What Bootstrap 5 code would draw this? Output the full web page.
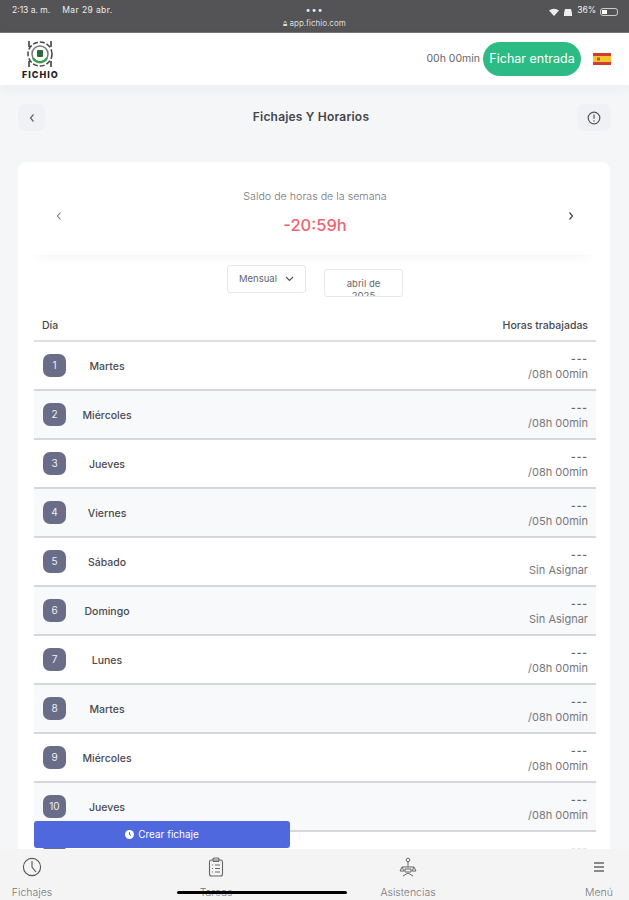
<!DOCTYPE html>
<html lang="es">
<head>
    <meta charset="UTF-8">
    <title>Fichajes Y Horarios</title>
    <meta name="viewport" content="width=device-width, initial-scale=1">
    <link href="https://cdn.jsdelivr.net/npm/bootstrap@5.3.2/dist/css/bootstrap.min.css" rel="stylesheet">
    <style>
        html, body { height: 900px; overflow: hidden; }
        body {
            background: #f5f6f8;
            font-family: "Inter", "Noto Sans", sans-serif;
            color: #3a3a40;
            position: relative;
        }
        .status-bar {
            height: 33px;
            background: #545456;
            border-bottom: 1px solid #77777a;
            color: #eee;
            font-size: 8.5px;
            padding: 4px 11px 0 12px;
            position: relative;
        }
        .status-date { margin-left: 12px; letter-spacing: .4px; }
        .status-mid { position: absolute; left: 0; right: 0; top: 5px; text-align: center; line-height: 1; }
        .status-dots { letter-spacing: 1px; font-size: 9px; line-height: 10px; }
        .status-url { font-size: 8px; color: #ddd; margin-top: 4px; }
        .battery { width: 18px; height: 8px; border: 1px solid #ccc; border-radius: 3px; padding: 1px; display: inline-block; }
        .battery i { display: block; width: 35%; height: 100%; background: #fff; }
        .top-head {
            height: 52px;
            background: #fff;
            padding: 0 18px 0 22px;
            box-shadow: 0 4px 10px rgba(40, 50, 70, .05);
            position: relative;
        }
        .logo-word { font-size: 9px; font-weight: 800; letter-spacing: 1px; color: #222; line-height: 1; margin-top: 1px; }
        .time-txt { font-size: 10.5px; color: #66666c; }
        .btn-fichar {
            background: #2dbb85;
            color: #fff;
            border: 0;
            border-radius: 17px;
            height: 34px;
            width: 98px;
            padding: 0;
            font-size: 12.5px;
            margin: 0 12px 0 3px;
        }
        .flag { width: 18px; height: 12px; display: block; }
        .sub-head { padding: 19px 18px 0; height: 77px; }
        .sq-btn {
            width: 27px; height: 27px;
            background: #eff1f4;
            border-radius: 7px;
            color: #555;
        }
        .sq-info { width: 34px; }
        .page-title { font-size: 12px; font-weight: 600; color: #45454b; letter-spacing: .2px; line-height: 18px; padding-top: 4px; }
        .main-box {
            margin: 0 19px 0 18px;
            background: #fff;
            border-radius: 8px;
            padding: 3px 14px 0 12px;
            height: 738px;
            overflow: hidden;
        }
        .week-box {
            height: 90px;
            padding: 0 21px 4px 25px;
            box-shadow: 0 10px 10px -8px rgba(40, 50, 70, .05);
            margin-bottom: 10px;
        }
        .week-arrow { margin-top: 16px; }
        .week-label { font-size: 10.7px; color: #77777c; font-weight: 300; margin-top: 8px; }
        .week-val { font-size: 16.5px; color: #ee6470; font-weight: 500; margin-top: 10px; line-height: 20px; }
        .filter-line { gap: 18px; margin-left: 4px; height: 32px; }
        .filter-box {
            width: 79px; height: 28px;
            border: 1px solid #e6e7ea;
            border-radius: 3px;
            font-size: 9.5px;
            color: #66666c;
            background: #fff;
        }
        .filter-date {
            margin-top: 4px;
            overflow: hidden;
            text-align: center;
            line-height: 12px;
            padding: 8px 18px 0;
        }
        .head-row {
            margin-top: 12px;
            margin-left: 4px;
            height: 33px;
            padding: 2px 8px 0;
            font-size: 10.5px;
            font-weight: 500;
            color: #47474d;
            border-bottom: 2px solid #dcdde0;
        }
        .day-row {
            margin-left: 4px;
            height: 49px;
            padding: 0 8px 0 9px;
            border-bottom: 2px solid #d6d7da;
        }
        .day-row:nth-child(even) { background: #f8f9fb; }
        .day-num {
            width: 23px; height: 23px;
            background: #6a6d88;
            color: #f0f0f4;
            border-radius: 7px;
            font-size: 10px;
            flex: none;
        }
        .day-name { width: 86px; text-align: center; font-size: 10.5px; font-weight: 500; color: #4a4a50; padding: 2px 4px 0 0; }
        .day-hours { font-size: 11px; line-height: 16px; text-align: right; color: #77777c; padding-top: 1px; }
        .day-hours b { display: block; font-weight: 700; color: #66666c; letter-spacing: 1px; font-size: 10px; }
        .btn-crear {
            position: absolute;
            left: 34px; top: 821px;
            width: 256px; height: 27px;
            background: #4f68dd;
            color: #fff;
            border: 0;
            border-radius: 3px;
            font-size: 10px;
            padding: 0;
            z-index: 3;
        }
        .tab-bar {
            position: absolute;
            left: 0; right: 0; top: 849px; height: 51px;
            background: #f4f4f5;
            z-index: 2;
            padding: 8px 0 0;
        }
        .tab-item { color: #77777c; font-size: 10.5px; font-weight: 300; line-height: 1; }
        .tab-item svg { display: block; margin-bottom: 11px; }
        .tab-1 { margin-left: 12px; width: 40px; }
        .tab-2 { margin-left: 147px; width: 34px; }
        .tab-3 { margin-left: 150px; width: 50px; }
        .tab-4 { margin-left: 152px; width: 28px; }
        .home-bar {
            position: absolute;
            left: 177px; top: 891px;
            width: 170px; height: 3px;
            background: #000;
            border-radius: 2px;
            z-index: 4;
        }
    </style>
</head>
<body>
    <div class="status-bar d-flex justify-content-between">
        <div><span>2:13 a. m.</span><span class="status-date">Mar 29 abr.</span></div>
        <div class="status-mid">
            <div class="status-dots">•••</div>
            <div class="status-url">🔒︎ app.fichio.com</div>
        </div>
        <div class="d-flex align-items-start gap-1">
            <svg width="10" height="9" viewBox="0 0 10 9" class="mt-1"><path d="M0 2.5Q5-1 10 2.5L5 8Z" fill="#eee"/></svg>
            <svg width="10" height="9" viewBox="0 0 10 9" class="mt-1"><path d="M2 1h6l1 4v3H1V5z" fill="#eee"/></svg>
            <span>36%</span>
            <span class="battery mt-1"><i></i></span>
        </div>
    </div>

    <header class="top-head d-flex align-items-center justify-content-between">
        <div class="d-flex flex-column align-items-center">
            <svg width="30" height="30" viewBox="0 0 30 30" fill="none">
                <circle cx="15" cy="15" r="12" stroke="#444" stroke-width="1.5" stroke-dasharray="5 2"/>
                <circle cx="15" cy="15" r="8" stroke="#777" stroke-width="1.5"/>
                <path d="M8 19a8 8 0 0 0 14 0" stroke="#3e9e50" stroke-width="2.5"/>
                <rect x="12" y="11" width="6" height="7" rx="1" fill="#2a6b38"/>
                <path d="M4 2v6M26 2v6M4 22v6M26 22v6" stroke="#333" stroke-width="1.5"/>
            </svg>
            <div class="logo-word">FICHIO</div>
        </div>
        <div class="d-flex align-items-center">
            <span class="time-txt">00h 00min</span>
            <button class="btn btn-fichar" type="button">Fichar entrada</button>
            <svg class="flag" viewBox="0 0 18 12"><rect width="18" height="12" fill="#d23b30"/><rect y="3" width="18" height="6" fill="#f4c430"/><rect x="4" y="4.5" width="3" height="3" fill="#c0552a"/></svg>
        </div>
    </header>

    <div class="sub-head d-flex justify-content-between align-items-start">
        <div class="sq-btn d-flex align-items-center justify-content-center">
            <svg width="8" height="10" viewBox="0 0 8 10" fill="none" stroke="#666" stroke-width="1.2"><path d="M5.5 1.5 2.5 5l3 3.5"/></svg>
        </div>
        <div class="page-title">Fichajes Y Horarios</div>
        <div class="sq-btn sq-info d-flex align-items-center justify-content-center">
            <svg width="14" height="14" viewBox="0 0 14 14" fill="none" stroke="#555" stroke-width="1.2"><circle cx="7" cy="7" r="5.8"/><path d="M7 3.5v4.2M7 9.3v1.2"/></svg>
        </div>
    </div>

    <main class="main-box">
        <div class="week-box d-flex align-items-center justify-content-between">
            <svg class="week-arrow" width="8" height="10" viewBox="0 0 8 10" fill="none" stroke="#777" stroke-width="1.1"><path d="M5.5 1.5 2.5 5l3 3.5"/></svg>
            <div class="text-center">
                <div class="week-label">Saldo de horas de la semana</div>
                <div class="week-val">-20:59h</div>
            </div>
            <svg class="week-arrow" width="8" height="10" viewBox="0 0 8 10" fill="none" stroke="#444" stroke-width="1.2"><path d="M2.5 1.5 5.5 5l-3 3.5"/></svg>
        </div>

        <div class="filter-line d-flex justify-content-center">
            <div class="filter-box d-flex align-items-center justify-content-center gap-2">
                <span>Mensual</span>
                <svg width="9" height="6" viewBox="0 0 9 6" fill="none" stroke="#555" stroke-width="1.2"><path d="M1 1l3.5 3.5L8 1"/></svg>
            </div>
            <div class="filter-box filter-date">abril de 2025</div>
        </div>

        <div class="head-row d-flex justify-content-between align-items-center">
            <span>Día</span>
            <span>Horas trabajadas</span>
        </div>

        <div>
            <div class="day-row d-flex align-items-center"><span class="day-num d-flex align-items-center justify-content-center">1</span><span class="day-name">Martes</span><div class="day-hours ms-auto"><b>---</b>/08h 00min</div></div>
            <div class="day-row d-flex align-items-center"><span class="day-num d-flex align-items-center justify-content-center">2</span><span class="day-name">Miércoles</span><div class="day-hours ms-auto"><b>---</b>/08h 00min</div></div>
            <div class="day-row d-flex align-items-center"><span class="day-num d-flex align-items-center justify-content-center">3</span><span class="day-name">Jueves</span><div class="day-hours ms-auto"><b>---</b>/08h 00min</div></div>
            <div class="day-row d-flex align-items-center"><span class="day-num d-flex align-items-center justify-content-center">4</span><span class="day-name">Viernes</span><div class="day-hours ms-auto"><b>---</b>/05h 00min</div></div>
            <div class="day-row d-flex align-items-center"><span class="day-num d-flex align-items-center justify-content-center">5</span><span class="day-name">Sábado</span><div class="day-hours ms-auto"><b>---</b>Sin Asignar</div></div>
            <div class="day-row d-flex align-items-center"><span class="day-num d-flex align-items-center justify-content-center">6</span><span class="day-name">Domingo</span><div class="day-hours ms-auto"><b>---</b>Sin Asignar</div></div>
            <div class="day-row d-flex align-items-center"><span class="day-num d-flex align-items-center justify-content-center">7</span><span class="day-name">Lunes</span><div class="day-hours ms-auto"><b>---</b>/08h 00min</div></div>
            <div class="day-row d-flex align-items-center"><span class="day-num d-flex align-items-center justify-content-center">8</span><span class="day-name">Martes</span><div class="day-hours ms-auto"><b>---</b>/08h 00min</div></div>
            <div class="day-row d-flex align-items-center"><span class="day-num d-flex align-items-center justify-content-center">9</span><span class="day-name">Miércoles</span><div class="day-hours ms-auto"><b>---</b>/08h 00min</div></div>
            <div class="day-row d-flex align-items-center"><span class="day-num d-flex align-items-center justify-content-center">10</span><span class="day-name">Jueves</span><div class="day-hours ms-auto"><b>---</b>/08h 00min</div></div>
            <div class="day-row d-flex align-items-center"><span class="day-num d-flex align-items-center justify-content-center">11</span><span class="day-name">Viernes</span><div class="day-hours ms-auto"><b>---</b>/05h 00min</div></div>
        </div>
    </main>

    <button class="btn btn-crear d-flex align-items-center justify-content-center gap-1" type="button">
        <svg width="9" height="9" viewBox="0 0 9 9"><circle cx="4.5" cy="4.5" r="4.5" fill="#fff"/><path d="M4.5 2v2.7L6 5.6" stroke="#4f68dd" fill="none"/></svg>
        Crear fichaje
    </button>

    <nav class="tab-bar d-flex align-items-start">
        <div class="tab-item tab-1 d-flex flex-column align-items-center">
            <svg width="20" height="20" viewBox="0 0 20 20" fill="none" stroke="#555" stroke-width="1.1"><circle cx="10" cy="10" r="8.6"/><path d="M10 4v6l4 5"/></svg>
            <span>Fichajes</span>
        </div>
        <div class="tab-item tab-2 d-flex flex-column align-items-center">
            <svg width="16" height="20" viewBox="0 0 16 20" fill="none" stroke="#666" stroke-width="1.1"><rect x="1.5" y="3" width="13" height="16" rx="2"/><rect x="5" y="1" width="6" height="3.5" rx="1"/><path d="M4 8h1M7 8h5M4 11.5h1M7 11.5h5M4 15h1M7 15h5"/></svg>
            <span>Tareas</span>
        </div>
        <div class="tab-item tab-3 d-flex flex-column align-items-center">
            <svg width="20" height="20" viewBox="0 0 20 20" fill="none" stroke="#666" stroke-width="1"><circle cx="10" cy="3" r="1.8"/><path d="M10 5v5M4 10h12M2 14l2-4 2 4zM14 14l2-4 2 4zM7 12h6v3H7zM5 19l5-3 5 3"/></svg>
            <span>Asistencias</span>
        </div>
        <div class="tab-item tab-4 d-flex flex-column align-items-center">
            <svg width="12" height="20" viewBox="0 0 12 20" fill="none" stroke="#666" stroke-width="1.5"><path d="M1 6h10M1 10h10M1 14h10"/></svg>
            <span>Menú</span>
        </div>
    </nav>
    <div class="home-bar"></div>
</body>
</html>
